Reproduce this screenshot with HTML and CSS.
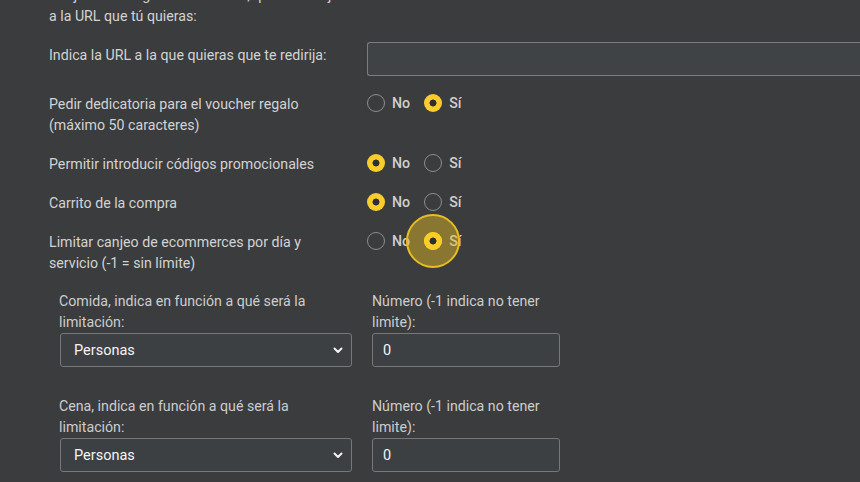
FILE: index.html
```html
<!DOCTYPE html>
<html lang="es">
<head>
<meta charset="utf-8">
<link rel="stylesheet" href="styles.css">
</head>
<body>
<div class="form">
  <div class="row">
    <div class="label">Canjear el código más adelante, que te redirija<br>a la URL que tú quieras:</div>
    <div></div>
  </div>
  <div class="row">
    <div class="label label-input">Indica la URL a la que quieras que te redirija:</div>
    <div class="url-box"></div>
  </div>
  <div class="row">
    <div class="label">Pedir dedicatoria para el voucher regalo<br>(máximo 50 caracteres)</div>
    <div class="radios">
      <span class="radio"></span><span class="opt">No</span>
      <span class="radio on"></span><span class="opt">Sí</span>
    </div>
  </div>
  <div class="row">
    <div class="label">Permitir introducir códigos promocionales</div>
    <div class="radios">
      <span class="radio on"></span><span class="opt">No</span>
      <span class="radio"></span><span class="opt">Sí</span>
    </div>
  </div>
  <div class="row">
    <div class="label">Carrito de la compra</div>
    <div class="radios">
      <span class="radio on"></span><span class="opt">No</span>
      <span class="radio"></span><span class="opt">Sí</span>
    </div>
  </div>
  <div class="row">
    <div class="label">Limitar canjeo de ecommerces por día y<br>servicio (-1 = sin límite)</div>
    <div class="radios">
      <span class="radio"></span><span class="opt">No</span>
      <span class="radio on focus"><span class="ripple"></span></span><span class="opt">Sí</span>
    </div>
  </div>

  <div class="sub">
    <div class="field">
      <div class="sublabel">Comida, indica en función a qué será la<br>limitación:</div>
      <div class="select"><span>Personas</span>
        <svg class="chev" width="10" height="7" viewBox="0 0 10 7"><path d="M1.5 1.5 L5 5 L8.5 1.5" fill="none" stroke="#f2f2f2" stroke-width="2" stroke-linecap="round" stroke-linejoin="round"/></svg>
      </div>
    </div>
    <div class="field">
      <div class="sublabel">Número (-1 indica no tener<br>limite):</div>
      <div class="num">0</div>
    </div>
  </div>

  <div class="sub sub2">
    <div class="field">
      <div class="sublabel">Cena, indica en función a qué será la<br>limitación:</div>
      <div class="select"><span>Personas</span>
        <svg class="chev" width="10" height="7" viewBox="0 0 10 7"><path d="M1.5 1.5 L5 5 L8.5 1.5" fill="none" stroke="#f2f2f2" stroke-width="2" stroke-linecap="round" stroke-linejoin="round"/></svg>
      </div>
    </div>
    <div class="field">
      <div class="sublabel">Número (-1 indica no tener<br>limite):</div>
      <div class="num">0</div>
    </div>
  </div>
</div>
</body>
</html>
```

FILE: styles.css
```css
html, body {
  margin: 0;
  padding: 0;
  background: #3a3c3e;
  overflow: hidden;
  height: 482px;
}
body {
  font-family: Roboto, "Liberation Sans", sans-serif;
  font-size: 14.2px;
  color: #d3d3d3;
}
.form {
  margin-top: -15px;
  padding-left: 49px;
  display: flex;
  flex-direction: column;
  gap: 15px;
}
.row {
  display: grid;
  grid-template-columns: 318px 1fr;
  align-items: start;
}
.label {
  line-height: 21px;
}
.row:not(:first-child) .label {
  padding-top: 3px;
}
.row .label-input {
  padding-top: 4.5px;
}
.url-box {
  height: 32px;
  border: 1px solid #7b7d7f;
  border-right: none;
  border-radius: 3px 0 0 3px;
  background: #404345;
}
.radios {
  display: flex;
  align-items: center;
  height: 21px;
  margin-top: 1px;
}
.radio {
  position: relative;
  box-sizing: border-box;
  width: 18px;
  height: 18px;
  border-radius: 50%;
  border: 1.5px solid #8b8d8f;
  flex: none;
}
.radio.on {
  border: none;
  background: radial-gradient(circle, #2e2f30 0 3.2px, #fbcd2c 3.8px);
}
.opt {
  margin-left: 7px;
  margin-right: 14px;
  font-weight: 500;
  color: #cfcfcf;
}
.ripple {
  position: absolute;
  left: 50%;
  top: 50%;
  width: 54px;
  height: 54px;
  margin: -27px 0 0 -27px;
  box-sizing: border-box;
  border-radius: 50%;
  border: 2px solid #e8bd22;
  background: rgba(232, 188, 34, 0.45);
  z-index: 2;
}
.radio.focus::after {
  content: "";
  position: absolute;
  inset: 0;
  border-radius: 50%;
  background: radial-gradient(circle, #2e2f30 0 3.2px, #fbcd2c 3.8px);
  z-index: 3;
}
.sub {
  display: grid;
  grid-template-columns: 293px 188px;
  column-gap: 20px;
  margin-left: 10px;
  margin-top: 2px;
}
.sub2 {
  margin-top: 14px;
}
.sublabel {
  line-height: 21px;
  color: #cdcdcd;
}
.select, .num {
  box-sizing: border-box;
  height: 34px;
  border: 1px solid #76787a;
  border-radius: 3px;
  background: #3d4042;
  display: flex;
  align-items: center;
  color: #f4f4f4;
  font-size: 14.5px;
}
.select {
  margin-left: 1px;
  width: 292px;
  padding: 0 8px 0 13px;
  justify-content: space-between;
}
.num {
  padding-left: 10px;
}
```
